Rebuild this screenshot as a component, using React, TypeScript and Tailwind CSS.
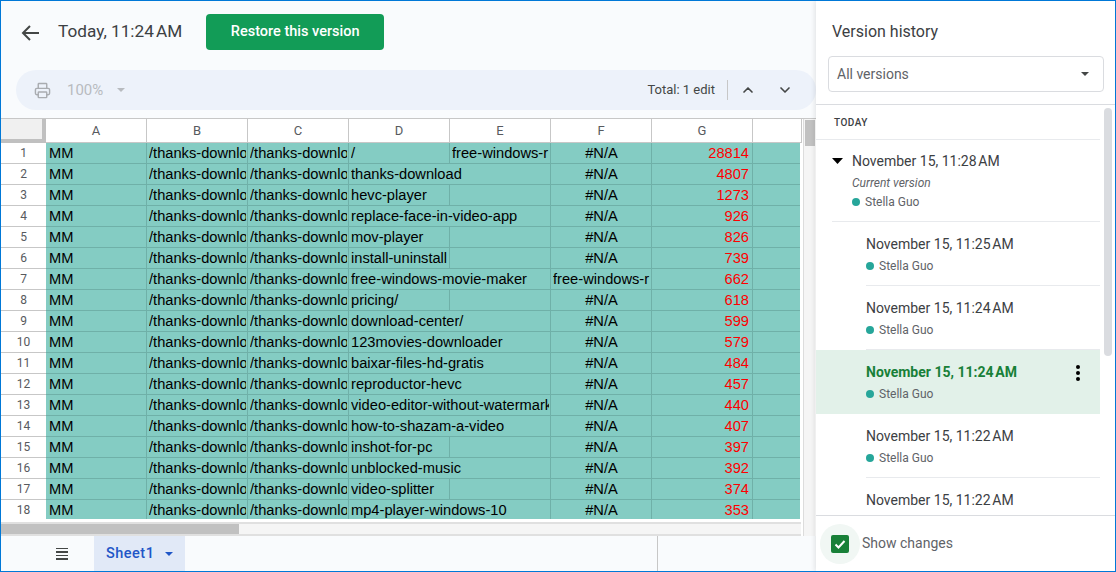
import type { ReactNode } from "react";
import { ChevronDown, ChevronUp, Printer } from "lucide-react";

type Row = { path: string; e?: string; f?: string; count: number; wide?: boolean };

const rows: Row[] = [
  { path: "/", e: "free-windows-r", count: 28814 },
  { path: "thanks-download", count: 4807, wide: true },
  { path: "hevc-player", count: 1273 },
  { path: "replace-face-in-video-app", count: 926, wide: true },
  { path: "mov-player", count: 826 },
  { path: "install-uninstall", count: 739 },
  { path: "free-windows-movie-maker", f: "free-windows-r", count: 662, wide: true },
  { path: "pricing/", count: 618 },
  { path: "download-center/", count: 599, wide: true },
  { path: "123movies-downloader", count: 579, wide: true },
  { path: "baixar-files-hd-gratis", count: 484, wide: true },
  { path: "reproductor-hevc", count: 457, wide: true },
  { path: "video-editor-without-watermark", count: 440, wide: true },
  { path: "how-to-shazam-a-video", count: 407, wide: true },
  { path: "inshot-for-pc", count: 397 },
  { path: "unblocked-music", count: 392, wide: true },
  { path: "video-splitter", count: 374 },
  { path: "mp4-player-windows-10", count: 353, wide: true },
];

const letters = ["A", "B", "C", "D", "E", "F", "G", ""];

const Cell = ({ children, className = "" }: { children?: ReactNode; className?: string }) => (
  <div className={`h-[21px] border-r border-b border-[#6fb0a8] pl-[2px] pr-[1px] leading-[20px] ${className}`}>
    <div className="overflow-hidden whitespace-nowrap">{children}</div>
  </div>
);

const Caret = ({ color = "#5f6368" }: { color?: string }) => (
  <svg width="8" height="4" viewBox="0 0 8 4">
    <path d="M0 0h8L4 4z" fill={color} />
  </svg>
);

const Author = () => (
  <div className="mt-[3px] flex items-center gap-[5px] text-[12px] leading-[18px] text-[#5f6368]">
    <span className="size-[8px] rounded-full bg-[#26a69a]" />
    Stella Guo
  </div>
);

const Version = ({ time, selected }: { time: string; selected?: boolean }) => (
  <div className={selected ? "relative h-16 bg-[#e2f1e9] pl-[50px] pt-[12px]" : "h-16 pl-[50px]"}>
    <div className={selected ? "" : "h-16 border-b border-[#e8eaed] pt-[12px]"}>
      <div className={selected ? "text-[14px] leading-[20px] font-bold text-[#188038]" : "text-[14px] leading-[20px] text-[#3c4043]"}>
        November 15, {time}
      </div>
      <Author />
    </div>
    {selected && (
      <div className="absolute right-[20px] top-[15px] flex flex-col gap-[2px]">
        <span className="size-[4px] rounded-full bg-black" />
        <span className="size-[4px] rounded-full bg-black" />
        <span className="size-[4px] rounded-full bg-black" />
      </div>
    )}
  </div>
);

export default function App() {
  return (
    <div className="flex h-[572px] w-[1116px] overflow-hidden border border-[#0078d7] bg-[#f9fbfd] font-['Roboto',sans-serif] text-[#3c4043]">
      <div className="flex w-[815px] shrink-0 flex-col">
        {/* top bar */}
        <div className="flex h-[61px] shrink-0 items-center pl-[20px] pt-[1px]">
          <svg width="18" height="18" viewBox="0 0 18 18" className="mt-[1px] text-[#444746]">
            <path d="M18 9H2.5M9 2 2 9l7 7" fill="none" stroke="currentColor" strokeWidth="2" />
          </svg>
          <span className="ml-[19px] text-[17.2px] text-[#3c4043]">Today, 11:24{"\u202F"}AM</span>
          <button className="ml-[24px] h-9 w-[178px] rounded-[4px] bg-[#129c57] text-[14.5px] font-medium text-white">
            Restore this version
          </button>
        </div>

        {/* toolbar */}
        <div className="mx-[15px] mt-[8px] flex h-10 w-[800px] shrink-0 items-center rounded-full bg-[#edf2fa] pl-[18px] pr-[23px]">
          <Printer size={17} strokeWidth={2} className="text-[#a9acb0]" />
          <span className="ml-[16px] mt-[1px] text-[15px] text-[#b8bbbf]">100%</span>
          <span className="ml-[14px] flex"><Caret color="#b8bbbf" /></span>
          <span className="ml-auto text-[13px] text-[#444746]">Total: 1 edit</span>
          <span className="ml-[12px] h-[20px] w-px bg-[#c7c7c7]" />
          <ChevronUp size={16} strokeWidth={2.5} className="ml-[12px] text-[#444746]" />
          <ChevronDown size={16} strokeWidth={2.5} className="ml-[21px] text-[#444746]" />
        </div>

        {/* sheet */}
        <div className="mt-[8px] flex shrink-0 border-t border-[#c7c7c7] bg-white font-['Liberation_Sans',sans-serif] text-[14.67px] text-black">
          <div className="flex w-[802px] shrink-0 flex-col">
            <div className="flex h-[24px]">
              <div className="w-[45px] shrink-0 border-r-[4px] border-b-[4px] border-[#c0c0c0] bg-[#f0f0f0]" />
              <div className="grid w-[756px] grid-cols-[repeat(7,101px)_49px] border-b border-[#c7c7c7]">
                {letters.map((l) => (
                  <div key={l} className="border-r border-[#c7c7c7] text-center font-['Roboto',sans-serif] text-[13px] leading-[23px] text-[#575a5e]">
                    {l}
                  </div>
                ))}
              </div>
            </div>
            <div className="flex h-[376px] flex-col overflow-hidden">
              {rows.map((r, i) => (
                <div key={i} className="flex h-[21px] shrink-0">
                  <div className="w-[45px] shrink-0 border-b border-[#c7c7c7] text-center font-['Roboto',sans-serif] text-[12px] leading-[20px] text-[#575a5e]">
                    {i + 1}
                  </div>
                  <div className="grid w-[754px] grid-cols-[repeat(7,101px)_47px] bg-[#84ccc3]">
                    <Cell className="pl-[3px]">MM</Cell>
                    <Cell>/thanks-download</Cell>
                    <Cell>/thanks-download</Cell>
                    {r.wide ? (
                      <Cell className="col-span-2">{r.path}</Cell>
                    ) : (
                      <>
                        <Cell>{r.path}</Cell>
                        <Cell>{r.e}</Cell>
                      </>
                    )}
                    <Cell className={r.f ? "" : "text-center"}>{r.f ?? "#N/A"}</Cell>
                    <Cell className="pr-[3px] text-right text-[#ff0000]">{r.count}</Cell>
                    <div className="h-[21px] border-b border-[#6fb0a8]" />
                  </div>
                </div>
              ))}
            </div>
            {/* horizontal scroll */}
            <div className="mt-[3px] h-[14px] w-[800px] border-y-2 border-[#e0e0e0] bg-[#f5f5f5]">
              <div className="h-full w-[238px] bg-[#c1c1c1]" />
            </div>
          </div>
          {/* vertical scroll */}
          <div className="w-[12px] shrink-0 border-l border-[#dcdcdc] bg-[#f5f5f5] pl-[1px] pt-px">
            <div className="h-[26px] w-[10px] bg-[#c1c1c1]" />
          </div>
        </div>

        {/* tabs */}
        <div className="flex min-h-0 flex-1 items-stretch">
          <div className="flex w-[93px] items-center justify-center pl-[29px]">
            <div className="flex flex-col gap-[2px]">
              <span className="h-[1.5px] w-[12px] bg-[#444746]" />
              <span className="h-[1.5px] w-[12px] bg-[#444746]" />
              <span className="h-[1.5px] w-[12px] bg-[#444746]" />
              <span className="h-[1.5px] w-[12px] bg-[#444746]" />
            </div>
          </div>
          <div className="flex w-[91px] items-center gap-[11px] bg-[#e1e9f7] pl-[12px] text-[14.5px] font-medium tracking-[0.5px] text-[#1f56c7]">
            Sheet1
            <Caret color="#1f56c7" />
          </div>
          <div className="ml-[472px] w-px bg-[#c7c7c7]" />
        </div>
      </div>

      {/* side panel */}
      <div className="relative flex w-[299px] shrink-0 flex-col bg-white shadow-[-2px_0_4px_rgba(0,0,0,0.08)]">
        <div className="h-[104px] shrink-0 border-b border-[#dadce0] pl-[12px] pr-[11px]">
          <div className="pl-[4px] pt-[20px] text-[16px] leading-[22px] text-[#3c4043]">Version history</div>
          <div className="mt-[13px] flex h-9 items-center justify-between rounded-[4px] border border-[#dadce0] pl-[8px] pr-[14px] text-[14px] text-[#5f6368]">
            All versions
            <Caret color="#444746" />
          </div>
        </div>
        <div className="relative min-h-0 flex-1 overflow-hidden">
          <div className="w-[284px]">
            <div className="h-[35px] border-b border-[#e8eaed] pl-[18px] pt-[11px] text-[10px] font-medium leading-[14px] tracking-[0.5px] text-[#3c4043]">
              TODAY
            </div>
            <div className="h-[82px] pl-[16px]">
              <div className="flex h-[82px] flex-col border-b border-[#e8eaed] pt-[11px]">
                <div className="flex items-center text-[14px] leading-[20px] text-[#3c4043]">
                  <svg width="11" height="6" viewBox="0 0 11 6" className="mr-[9px]">
                    <path d="M0 0h11L5.5 6z" fill="#000" />
                  </svg>
                  November 15, 11:28{"\u202F"}AM
                </div>
                <div className="ml-[20px] mt-[3px] text-[12px] italic leading-[18px] text-[#5f6368]">Current version</div>
                <div className="ml-[20px] -mt-[2px]"><Author /></div>
              </div>
            </div>
            <Version time={"11:25\u202FAM"} />
            <Version time={"11:24\u202FAM"} />
            <Version time={"11:24\u202FAM"} selected />
            <Version time={"11:22\u202FAM"} />
            <Version time={"11:22\u202FAM"} />
          </div>
          <div className="absolute right-[3px] top-[3px] h-[248px] w-[8px] rounded-full bg-[#dadce0]" />
        </div>
        <div className="flex h-[56px] shrink-0 items-center border-t border-[#dadce0] bg-white pl-[4px]">
          <div className="flex size-10 items-center justify-center rounded-full bg-[#f1f7f4]">
            <div className="flex size-[18px] items-center justify-center rounded-[2px] bg-[#188038]">
              <svg width="14" height="14" viewBox="0 0 14 14">
                <path d="M2.5 7.5 5.5 10.5 11.5 4" fill="none" stroke="#fff" strokeWidth="2" />
              </svg>
            </div>
          </div>
          <span className="ml-[2px] text-[14px] text-[#5f6368]">Show changes</span>
        </div>
      </div>
    </div>
  );
}
